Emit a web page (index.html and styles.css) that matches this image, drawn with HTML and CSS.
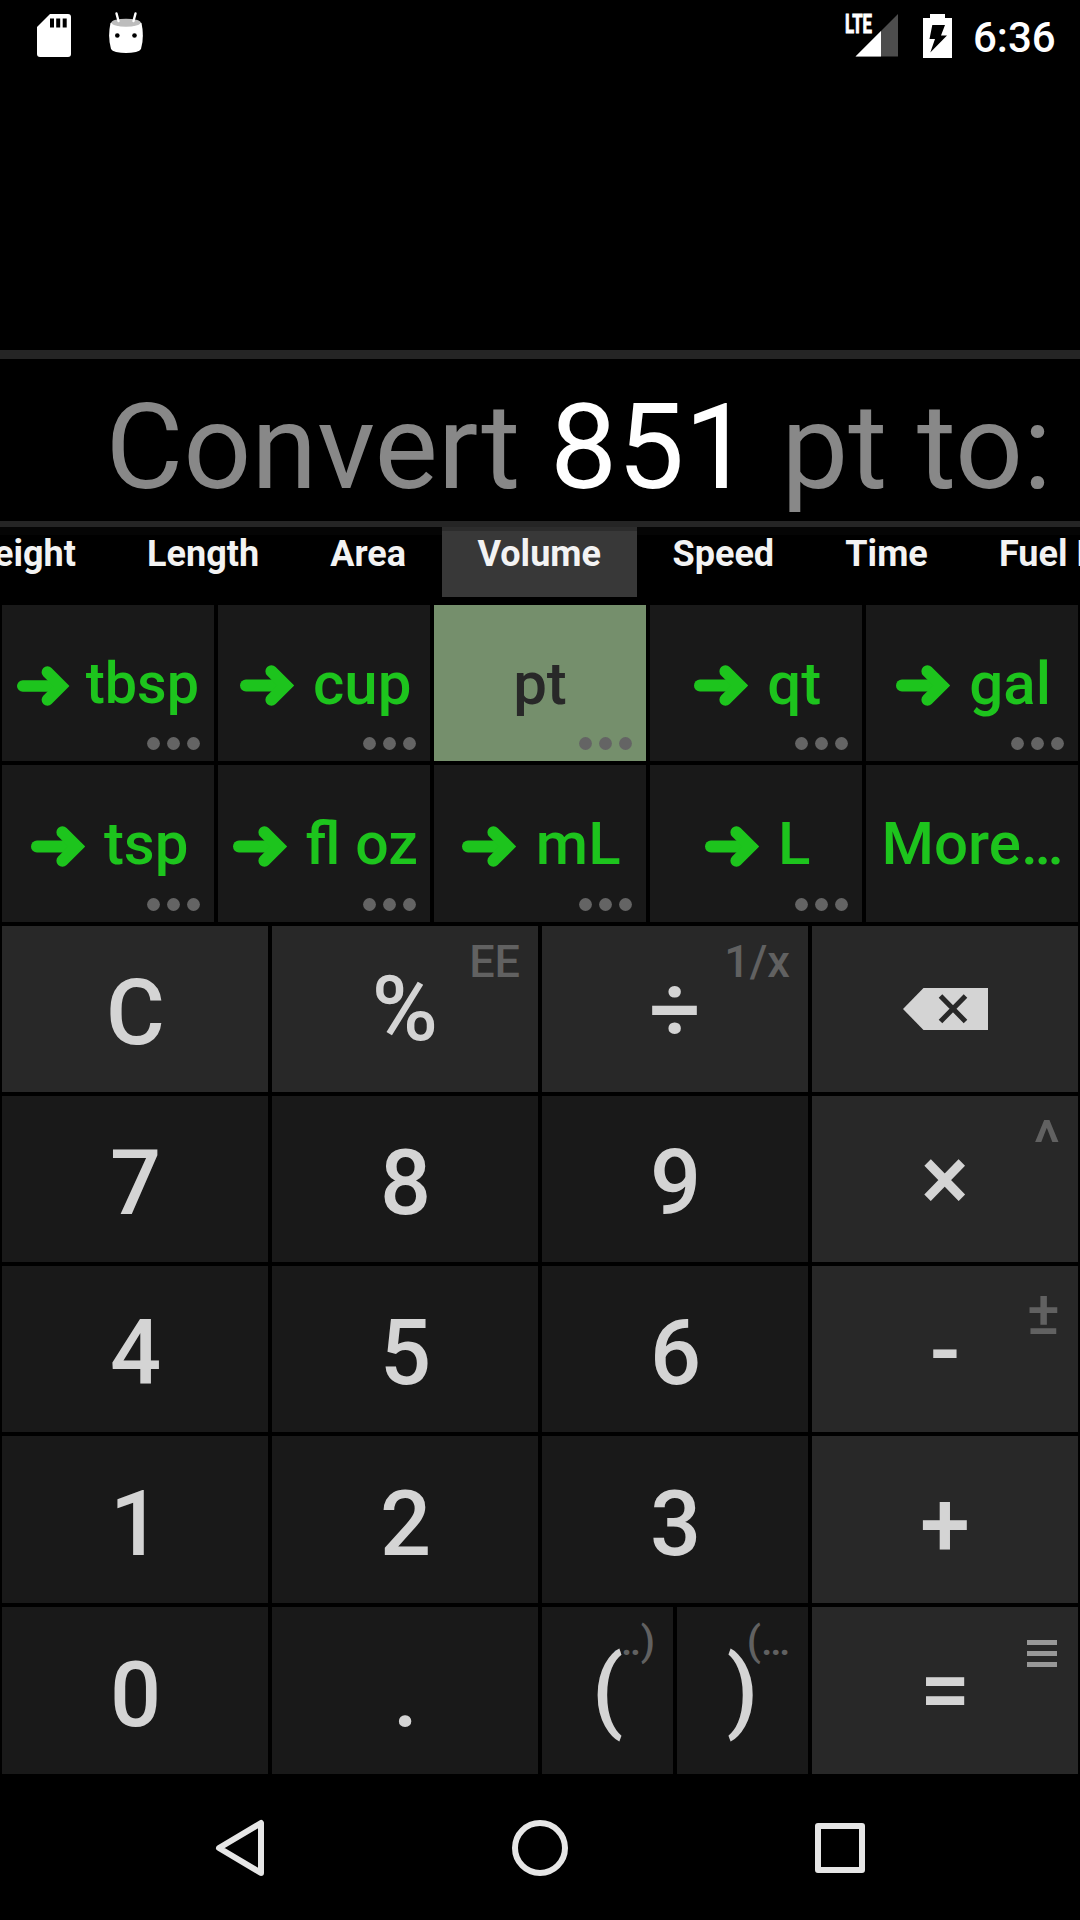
FILE: index.html
```html
<!DOCTYPE html>
<html lang="en">
<head>
<meta charset="utf-8">
<title>Calculator</title>
<link rel="stylesheet" href="styles.css">
</head>
<body>
<svg class="defs" width="0" height="0" aria-hidden="true">
  <symbol id="arrow" viewBox="0 0 54.4 41">
    <path d="M6 20.5H44" fill="none" stroke="currentColor" stroke-width="12" stroke-linecap="round"/>
    <path d="M31.4 6.2L45.7 20.5L31.4 34.8" fill="none" stroke="currentColor" stroke-width="12" stroke-linecap="round"/>
  </symbol>
  <symbol id="dots" viewBox="0 0 53 13">
    <circle cx="6.5" cy="6.5" r="6.4" fill="currentColor"/><circle cx="26.5" cy="6.5" r="6.4" fill="currentColor"/><circle cx="46.5" cy="6.5" r="6.4" fill="currentColor"/>
  </symbol>
</svg>
<div class="screen">
  <header class="status">
    <svg class="sd" width="34" height="43" viewBox="0 0 34 43"><path d="M13 0H31Q34 0 34 3V40Q34 43 31 43H3Q0 43 0 40V13Z" fill="#fff"/><path d="M13 4.5h4v9h-4zM19.200 4.500h4v9h-4zM25.700 4.500h4v9h-4z" fill="#000"/></svg>
    <svg class="droid" width="34" height="42" viewBox="0 0 34 42"><path d="M1.500 11Q17 3.500 32.500 11Q35.500 25 32 37Q31 39 27 40Q17 42 7 40Q3 39 2 37Q-1.500 25 1.500 11Z" fill="#fff"/><ellipse cx="17" cy="10.700" rx="14.500" ry="4" fill="#bdbdbd"/><path d="M7.500 1.500L9.500 9M26.500 1.500L24.500 9" stroke="#fff" stroke-width="2.400" stroke-linecap="round"/><circle cx="8.300" cy="23.500" r="2.300"/><circle cx="25.500" cy="23.500" r="2.300"/></svg>
    <span class="fill"></span>
    <svg class="signal" width="54" height="43" viewBox="0 0 54 43"><path d="M53 0V42.500H10.500Z" fill="#4d4d4d"/><path d="M36 17V42.500H10.500Z" fill="#fff"/><text x="0" y="19" textLength="27" lengthAdjust="spacingAndGlyphs" class="lte">LTE</text></svg>
    <svg class="battery" width="29" height="44" viewBox="0 0 29 44"><path d="M7 0H22V4H29V44H0V4H7Z" fill="#fff"/><path d="M9.300 11H22L18 21.500H24L7.300 38.500L12 25H6.500Z"/></svg>
    <time class="clock">6:36</time>
  </header>
  <div class="history"></div>
  <div class="display"><span>Convert <b>851</b> pt to:</span></div>
  <nav class="tabs">
    <div class="tab-list">
      <span class="tab">Weight</span><span class="tab">Length</span><span class="tab">Area</span><span class="tab active">Volume</span><span class="tab">Speed</span><span class="tab">Time</span><span class="tab">Fuel Economy</span>
    </div>
  </nav>
  <section class="units">
    <button class="unit arrowed tight"><svg class="arrow"><use href="#arrow"/></svg>tbsp<svg class="dots"><use href="#dots"/></svg></button>
    <button class="unit arrowed"><svg class="arrow"><use href="#arrow"/></svg>cup<svg class="dots"><use href="#dots"/></svg></button>
    <button class="unit selected">pt<svg class="dots"><use href="#dots"/></svg></button>
    <button class="unit arrowed"><svg class="arrow"><use href="#arrow"/></svg>qt<svg class="dots"><use href="#dots"/></svg></button>
    <button class="unit arrowed"><svg class="arrow"><use href="#arrow"/></svg>gal<svg class="dots"><use href="#dots"/></svg></button>
    <button class="unit arrowed"><svg class="arrow"><use href="#arrow"/></svg>tsp<svg class="dots"><use href="#dots"/></svg></button>
    <button class="unit arrowed snug"><svg class="arrow"><use href="#arrow"/></svg>fl oz<svg class="dots"><use href="#dots"/></svg></button>
    <button class="unit arrowed"><svg class="arrow"><use href="#arrow"/></svg>mL<svg class="dots"><use href="#dots"/></svg></button>
    <button class="unit arrowed"><svg class="arrow"><use href="#arrow"/></svg>L<svg class="dots"><use href="#dots"/></svg></button>
    <button class="unit more">More…</button>
  </section>
  <section class="keys">
    <button class="key op low">C</button>
    <button class="key op">%<span class="hint">EE</span></button>
    <button class="key op divide">÷<span class="hint">1/x</span></button>
    <button class="key op erase"><svg width="85" height="42" viewBox="0 0 85 42"><path d="M0 21L20.500 0H85V42H20.500Z" fill="#d4d4d4"/><path d="M37.500 8L62.500 33.500M62.500 8L37.500 33.500" stroke="#282828" stroke-width="5"/></svg></button>
    <button class="key low">7</button>
    <button class="key low">8</button>
    <button class="key low">9</button>
    <button class="key op">×<span class="hint symbol">^</span></button>
    <button class="key low">4</button>
    <button class="key low">5</button>
    <button class="key low">6</button>
    <button class="key op minus">-<span class="hint symbol">±</span></button>
    <button class="key low">1</button>
    <button class="key low">2</button>
    <button class="key low">3</button>
    <button class="key op plus">+</button>
    <button class="key low">0</button>
    <button class="key low">.</button>
    <div class="pair">
      <button class="key"><span class="hint paren">…)</span><span class="face">(</span></button>
      <button class="key"><span class="hint paren">(…</span><span class="face">)</span></button>
    </div>
    <button class="key op">=<svg class="menu" width="30" height="27" viewBox="0 0 30 27"><path d="M0 0h30v5H0zM0 11h30v5H0zM0 22h30v5H0z" fill="#989898"/></svg></button>
  </section>
  <footer class="navbar">
    <svg width="60" height="60" viewBox="0 0 60 60"><path d="M9 30L51 5V55Z"/></svg>
    <svg width="60" height="60" viewBox="0 0 60 60"><circle cx="30" cy="30" r="25"/></svg>
    <svg width="60" height="60" viewBox="0 0 60 60"><rect x="8" y="8" width="44" height="44"/></svg>
  </footer>
</div>
</body>
</html>
```
FILE: styles.css
```css
* { box-sizing: border-box; }
body { margin: 0; background: #000; font-family: Roboto, sans-serif; }
button { border: 0; padding: 0; margin: 0; font: inherit; color: inherit; background: none; }
.defs { position: absolute; }

.screen {
  width: 1080px;
  height: 1920px;
  display: flex;
  flex-direction: column;
  overflow: hidden;
  background: #000;
}

.status {
  height: 72px;
  padding: 0 26px 1px 37px;
  display: flex;
  align-items: center;
  flex: none;
}
.droid { margin-left: 38px; margin-bottom: 6px; }
.fill { flex: 1; }
.signal { overflow: visible; }
.lte { font: 700 26px Roboto, sans-serif; fill: #fff; stroke: #fff; stroke-width: 1; }
.battery { margin-left: 24px; }
.clock { width: 81px; margin-left: 21px; padding-top: 4px; color: #fff; font-size: 42px; font-weight: 500; line-height: 74px; white-space: nowrap; }

.history { height: 278px; flex: none; }

.display {
  height: 177px;
  flex: none;
  border-top: 9px solid #252525;
  border-bottom: 6px solid #252525;
  padding: 15px 28px 0 0;
  display: flex;
  align-items: center;
  justify-content: flex-end;
  font-size: 119.5px;
  line-height: 147px;
  color: #888;
  white-space: pre;
}
.display b { font-weight: 400; color: #fff; }

.tabs {
  height: 76px;
  flex: none;
  overflow: hidden;
  background: linear-gradient(#050505 8px, #000 8px);
}
.tab-list { display: flex; margin-left: -72.6px; }
.tab {
  flex: none;
  height: 70px;
  padding: 1px 35.6px 0;
  color: #f3f3f3;
  font-size: 36px;
  font-weight: 700;
  line-height: 53px;
  white-space: nowrap;
}
.tab.active { padding: 1px 36px 0; background: linear-gradient(#2c2c2c 4px, #383838 4px); }

.units {
  height: 321px;
  flex: none;
  padding: 2px;
  display: grid;
  grid-template-columns: repeat(5, 212px);
  grid-template-rows: 156px 157px;
  gap: 4px;
}
.unit {
  position: relative;
  display: flex;
  align-items: center;
  justify-content: center;
  background: #191919;
  color: #1dc41d;
  font-size: 60px;
  font-weight: 500;
  white-space: nowrap;
}
.unit.arrowed { padding-left: 3px; }
.unit.more { padding-left: 1px; }
.unit.selected { background: #758f6c; color: #282828; }
.unit.tight { font-size: 57.5px; padding-left: 0; }
.unit.snug { font-size: 59px; }
.arrow { width: 54.4px; height: 41px; margin: 5px 19px 0 0; flex: none; }
.tight .arrow { width: 52.7px; height: 40px; margin-right: 16px; }
.snug .arrow { margin-right: 18px; }
.dots { position: absolute; right: 14px; bottom: 11px; width: 53px; height: 13px; color: #646464; }

.keys {
  height: 852px;
  flex: none;
  padding: 2px;
  display: grid;
  grid-template-columns: repeat(4, 266px);
  grid-template-rows: 166px 166px 166px 167px 167px;
  gap: 4px;
}
.pair { display: grid; grid-template-columns: 1fr 1fr; gap: 4px; }
.key {
  position: relative;
  display: flex;
  align-items: center;
  justify-content: center;
  padding-top: 1px;
  background: #191919;
  color: #d4d4d4;
  font-size: 90px;
  font-weight: 500;
  line-height: 106px;
}
.key.op { background: #282828; }
.key.low { padding: 10px 0 0 1px; }
.key.divide { padding-top: 4px; }
.key.minus { padding-top: 3px; }
.key.plus { padding-top: 13px; }
.key.erase { padding: 0; }
.face { position: relative; }
.hint {
  position: absolute;
  top: 9px;
  right: 18px;
  color: #616161;
  font-size: 45px;
  line-height: 54px;
}
.hint.symbol { top: 20px; font-size: 62px; }
.hint.paren { top: 7px; font-size: 41px; }
.menu { position: absolute; top: 33px; right: 21px; }

.navbar {
  height: 144px;
  flex: none;
  display: flex;
  align-items: center;
  justify-content: center;
  gap: 240px;
}
.navbar svg { fill: none; stroke: #e6e6e6; stroke-width: 6; stroke-linejoin: round; }
```
